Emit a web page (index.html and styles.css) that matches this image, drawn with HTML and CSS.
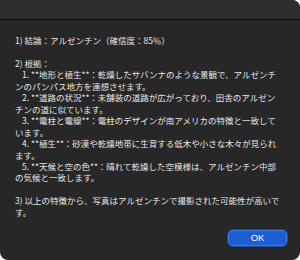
FILE: index.html
```html
<!DOCTYPE html>
<html lang="ja">
<head>
<meta charset="utf-8">
<link rel="stylesheet" href="styles.css">
</head>
<body>
<div class="win">
  <div class="titlebar"></div>
  <div class="content">
    <p class="line">1) 結論：アルゼンチン（確信度：85％）</p>
    <p class="line blank"></p>
    <p class="line">2) 根拠：</p>
    <p class="item">1. **地形と植生**：乾燥したサバンナのような景観で、アルゼンチ<br>ンのパンパス地方を連想させます。</p>
    <p class="item">2. **道路の状況**：未舗装の道路が広がっており、田舎のアルゼン<br>チンの道に似ています。</p>
    <p class="item">3. **電柱と電線**：電柱のデザインが南アメリカの特徴と一致して<br>います。</p>
    <p class="item">4. **植生**：砂漠や乾燥地帯に生育する低木や小さな木々が見られ<br>ます。</p>
    <p class="item">5. **天候と空の色**：晴れて乾燥した空模様は、アルゼンチン中部<br>の気候と一致します。</p>
    <p class="line blank"></p>
    <p class="line">3) 以上の特徴から、写真はアルゼンチンで撮影された可能性が高いで<br>す。</p>
  </div>
  <div class="actions">
    <button class="ok" type="button">OK</button>
  </div>
</div>
</body>
</html>
```
FILE: styles.css
```css
* { box-sizing: border-box; }
html, body {
  margin: 0;
  padding: 0;
  background: #ffffff;
}
.win {
  width: 300px;
  height: 260px;
  background: #272727;
  border-radius: 0 8px 8px 8px;
  overflow: hidden;
  display: flex;
  flex-direction: column;
  font-family: "Noto Sans CJK JP", "Liberation Sans", sans-serif;
}
.titlebar {
  height: 20px;
  background: #2e2e2e;
  border-bottom: 1px solid #0e0e0e;
  flex: none;
}
.content {
  flex: 1;
  padding: 15px 10px 0 15px;
  color: #e6e6e6;
  font-size: 8.5px;
  line-height: 11.45px;
  white-space: nowrap;
}
.content p {
  margin: 0;
}
.blank {
  height: 11.45px;
}
.item {
  text-indent: 7px;
}
.actions {
  display: flex;
  justify-content: flex-end;
  padding: 0 13px 14px 0;
  flex: none;
}
.ok {
  width: 59px;
  height: 16px;
  padding: 0;
  border: 1px solid #3d7be3;
  border-radius: 5px;
  background: #1c5fd3;
  box-shadow: 0 0 0 1px #1a4b93;
  color: #ffffff;
  font-family: "Liberation Sans", "Noto Sans", sans-serif;
  font-size: 9.5px;
  font-weight: 500;
  line-height: 14px;
}
```
